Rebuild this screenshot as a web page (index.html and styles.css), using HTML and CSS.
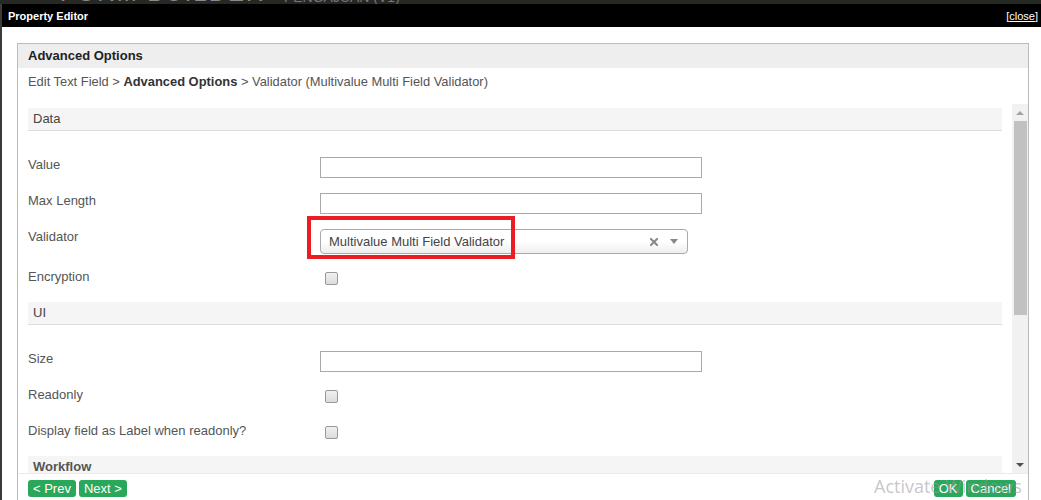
FILE: index.html
```html
<!DOCTYPE html>
<html>
<head>
<meta charset="utf-8">
<title>Property Editor</title>
<link rel="stylesheet" href="styles.css">
</head>
<body>
<div class="backdrop"><span class="bd-title">FORM BUILDER</span><span class="bd-sub">- PENGAJUAN (V1)</span></div>
<div class="dialog">
  <div class="titlebar">
    <span class="title">Property Editor</span>
    <span class="close">[<u>close</u>]</span>
  </div>
  <div class="content">
    <div class="panel">
      <div class="panel-head">Advanced Options</div>
      <div class="crumb">Edit Text Field &gt; <b>Advanced Options</b> &gt; Validator (Multivalue Multi Field Validator)</div>
      <div class="scroll">
        <div class="scroll-content">
          <div class="sec">Data</div>
          <div class="sec-body">
            <div class="row"><div class="label">Value</div><div class="field"><div class="input"></div></div></div>
            <div class="row"><div class="label">Max Length</div><div class="field"><div class="input"></div></div></div>
            <div class="row row-select"><div class="label">Validator</div>
              <div class="field">
                <div class="select"><span class="sel-text">Multivalue Multi Field Validator</span><svg class="sel-clear" width="8" height="8" viewBox="0 0 8 8"><path d="M1 1L7 7M7 1L1 7" stroke="#888" stroke-width="2" stroke-linecap="square"/></svg><span class="sel-arrow"></span></div>
                <div class="highlight"></div>
              </div>
            </div>
            <div class="row"><div class="label">Encryption</div><div class="field"><div class="checkbox"></div></div></div>
          </div>
          <div class="sec">UI</div>
          <div class="sec-body">
            <div class="row"><div class="label">Size</div><div class="field"><div class="input"></div></div></div>
            <div class="row"><div class="label">Readonly</div><div class="field"><div class="checkbox"></div></div></div>
            <div class="row"><div class="label">Display field as Label when readonly?</div><div class="field"><div class="checkbox"></div></div></div>
          </div>
          <div class="sec sec-bold">Workflow</div>
        </div>
        <div class="scrollbar">
          <div class="sb-btn"><span class="sb-up"></span></div>
          <div class="sb-thumb"></div>
          <div class="sb-fill"></div>
          <div class="sb-btn"><span class="sb-down"></span></div>
        </div>
      </div>
      <div class="footer">
        <div class="btns"><span class="btn">&lt; Prev</span><span class="btn">Next &gt;</span></div>
        <div class="btns"><span class="btn">OK</span><span class="btn">Cancel</span></div>
      </div>
    </div>
  </div>
</div>
<div class="watermark">Activate Windows</div>
</body>
</html>
```
FILE: styles.css
```css
html, body {
  margin: 0;
  padding: 0;
}
body {
  background: #3a3b38;
  font-family: "Liberation Sans", Arial, sans-serif;
  width: 1041px;
  height: 500px;
  overflow: hidden;
  position: relative;
}
.backdrop {
  height: 4px;
  overflow: hidden;
  background: #262824;
  white-space: nowrap;
  padding-left: 60px;
}
.bd-title {
  display: inline-block;
  font-size: 24px;
  line-height: 24px;
  margin-top: -19px;
  color: #8a8a86;
  letter-spacing: 2px;
  vertical-align: top;
}
.bd-sub {
  display: inline-block;
  font-size: 14px;
  line-height: 14px;
  margin-top: -10px;
  margin-left: 10px;
  color: #777;
  vertical-align: top;
}
.dialog {
  margin-left: 2px;
  background: #fff;
  height: 496px;
  display: flex;
  flex-direction: column;
}
.titlebar {
  height: 23px;
  background: #000;
  color: #fff;
  display: flex;
  justify-content: space-between;
  align-items: center;
  padding: 0 3px 0 6px;
  font-size: 11px;
  flex-shrink: 0;
}
.title {
  font-weight: bold;
}
.close u {
  text-decoration: underline;
}
.content {
  flex: 1;
  padding: 16px 12px 0 15px;
  display: flex;
  flex-direction: column;
}
.panel {
  flex: 1;
  border: 1px solid #bcbcbc;
  border-bottom: none;
  display: flex;
  flex-direction: column;
}
.panel-head {
  height: 24px;
  line-height: 24px;
  background: #eee;
  padding-left: 10px;
  font-size: 13px;
  font-weight: bold;
  color: #222;
}
.crumb {
  height: 27px;
  line-height: 27px;
  padding-left: 10px;
  font-size: 12.9px;
  color: #555;
  margin-bottom: 9px;
}
.crumb b {
  color: #333;
}
.scroll {
  display: flex;
  height: 369px;
  border-bottom: 1px solid #eaeaea;
}
.scroll-content {
  flex: 1;
  overflow: hidden;
  padding: 4px 10px 0 10px;
}
.sec {
  height: 22px;
  line-height: 22px;
  background: #f5f5f5;
  border-bottom: 1px solid #ddd;
  padding-left: 5px;
  font-size: 13px;
  color: #444;
}
.sec-bold {
  font-weight: bold;
  color: #555;
}
.sec-body {
  padding-top: 23px;
}
.row {
  display: flex;
  height: 36px;
}
.row-select {
  height: 40px;
}
.label {
  width: 292px;
  padding-top: 4px;
  font-size: 13px;
  line-height: 14px;
  color: #555;
}
.field {
  position: relative;
}
.input {
  margin-top: 3px;
  width: 380px;
  height: 19px;
  border: 1px solid #a9a9a9;
  background: #fff;
}
.select {
  margin-top: 3px;
  height: 23px;
  border: 1px solid #aaa;
  border-radius: 4px;
  background: linear-gradient(#ffffff 0%, #ffffff 50%, #eeeeee 100%);
  display: flex;
  align-items: center;
  font-size: 13px;
  color: #444;
  padding-left: 8px;
  width: 358px;
}
.sel-text {
  flex: 1;
}
.sel-clear {
  margin-right: 12px;
}
.sel-arrow {
  width: 0;
  height: 0;
  border-left: 4px solid transparent;
  border-right: 4px solid transparent;
  border-top: 5px solid #888;
  margin-right: 9px;
}
.highlight {
  position: absolute;
  left: -13px;
  top: -10px;
  width: 208px;
  height: 43px;
  box-sizing: border-box;
  border: 4px solid #ec1c24;
}
.checkbox {
  margin-top: 6px;
  margin-left: 5px;
  width: 11px;
  height: 11px;
  border: 1px solid #999;
  border-radius: 2px;
  background: linear-gradient(#f0f0f0, #dcdcdc);
}
.scrollbar {
  width: 16px;
  background: #f1f1f1;
  display: flex;
  flex-direction: column;
  align-items: center;
}
.sb-btn {
  height: 17px;
  width: 16px;
  display: flex;
  align-items: center;
  justify-content: center;
}
.sb-up {
  width: 0;
  height: 0;
  border-left: 4px solid transparent;
  border-right: 4px solid transparent;
  border-bottom: 4px solid #a3a3a3;
}
.sb-down {
  width: 0;
  height: 0;
  border-left: 4px solid transparent;
  border-right: 4px solid transparent;
  border-top: 4px solid #505050;
}
.sb-thumb {
  width: 13px;
  height: 194px;
  background: #c1c1c1;
}
.sb-fill {
  flex: 1;
}
.footer {
  display: flex;
  justify-content: space-between;
  padding: 6px 12px 0 10px;
}
.btns {
  display: flex;
  gap: 3px;
}
.btn {
  height: 17px;
  line-height: 17px;
  padding: 0 5px;
  background: #29a85c;
  color: #fff;
  font-size: 13px;
  border-radius: 3px;
}
.watermark {
  position: absolute;
  left: 874px;
  top: 474px;
  font-family: "Open Sans", "Noto Sans", sans-serif;
  font-size: 18px;
  color: rgba(150, 150, 150, 0.55);
  white-space: nowrap;
  z-index: 5;
}
```
